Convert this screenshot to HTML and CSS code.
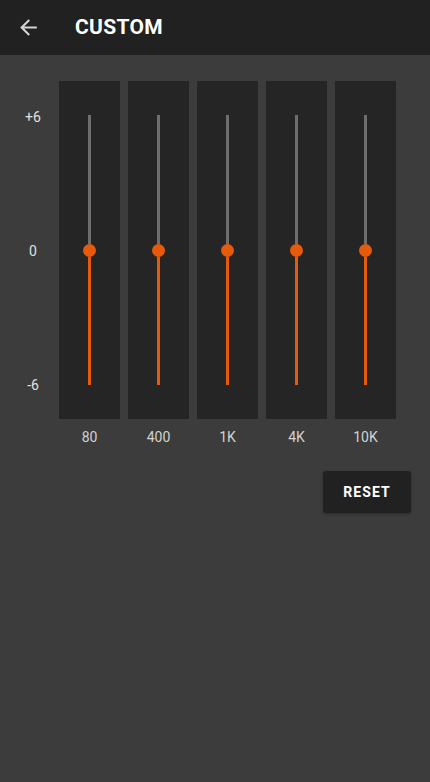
FILE: index.html
```html
<!DOCTYPE html>
<html>
<head>
<meta charset="utf-8">
<link rel="stylesheet" href="styles.css">
</head>
<body>
<div class="app">
  <header class="topbar">
    <svg class="back" viewBox="0 0 24 24" width="25" height="25"><path d="M20 11H7.83l5.59-5.59L12 4l-8 8 8 8 1.41-1.41L7.83 13H20v-2z" fill="#d4d4d4"/></svg>
    <h1 class="title">CUSTOM</h1>
  </header>
  <main class="content">
    <div class="eq">
      <div class="scale">
        <span>+6</span>
        <span>0</span>
        <span>-6</span>
      </div>
      <div class="bands">
        <div class="band"><div class="track"><div class="upper"></div><div class="thumb"></div><div class="lower"></div></div></div>
        <div class="band"><div class="track"><div class="upper"></div><div class="thumb"></div><div class="lower"></div></div></div>
        <div class="band"><div class="track"><div class="upper"></div><div class="thumb"></div><div class="lower"></div></div></div>
        <div class="band"><div class="track"><div class="upper"></div><div class="thumb"></div><div class="lower"></div></div></div>
        <div class="band"><div class="track"><div class="upper"></div><div class="thumb"></div><div class="lower"></div></div></div>
      </div>
    </div>
    <div class="freqs">
      <span>80</span><span>400</span><span>1K</span><span>4K</span><span>10K</span>
    </div>
    <div class="actions">
      <button class="reset">RESET</button>
    </div>
  </main>
</div>
</body>
</html>
```
FILE: styles.css
```css
html, body {
  margin: 0;
  padding: 0;
}
body {
  background: #3c3c3c;
  font-family: Roboto, "Liberation Sans", sans-serif;
  width: 430px;
  height: 782px;
  overflow: hidden;
}
.app {
  display: flex;
  flex-direction: column;
  height: 782px;
}
.topbar {
  height: 55px;
  background: #212121;
  display: flex;
  align-items: center;
  box-sizing: border-box;
  padding-left: 16px;
}
.back {
  display: block;
  margin-top: -1px;
}
.title {
  margin: -1px 0 0 34px;
  color: #ffffff;
  font-size: 21px;
  font-weight: 700;
  letter-spacing: 0.3px;
}
.content {
  padding-top: 26px;
}
.eq {
  display: flex;
}
.scale {
  width: 52px;
  padding-left: 7px;
  display: flex;
  flex-direction: column;
  justify-content: space-between;
  align-items: center;
  margin-top: 26px;
  height: 288px;
  color: #e0e0e0;
  font-size: 14px;
  line-height: 20px;
}
.bands {
  display: flex;
  gap: 8px;
}
.band {
  width: 61px;
  height: 338px;
  background: #252525;
  display: flex;
  justify-content: center;
  padding-top: 34px;
  box-sizing: border-box;
}
.track {
  width: 13px;
  height: 270px;
  display: flex;
  flex-direction: column;
  align-items: center;
}
.upper {
  width: 3px;
  height: 129px;
  background: #6e6e6e;
}
.thumb {
  width: 13px;
  height: 13px;
  border-radius: 50%;
  background: #e65a0c;
  flex: none;
}
.lower {
  width: 3px;
  flex: 1;
  background: #e65a0c;
}
.freqs {
  display: flex;
  gap: 8px;
  padding-left: 59px;
  margin-top: 8px;
  color: #d2d2d2;
  font-size: 14px;
  line-height: 20px;
}
.freqs span {
  width: 61px;
  text-align: center;
}
.actions {
  display: flex;
  justify-content: flex-end;
  padding-right: 19px;
  margin-top: 24px;
}
.reset {
  width: 88px;
  height: 42px;
  background: #212121;
  border: none;
  border-radius: 3px;
  color: #ffffff;
  font-family: Roboto, "Liberation Sans", sans-serif;
  font-size: 14px;
  font-weight: 700;
  letter-spacing: 1.1px;
  box-shadow: 0 1px 3px rgba(0,0,0,0.3);
  padding: 0;
}
```
